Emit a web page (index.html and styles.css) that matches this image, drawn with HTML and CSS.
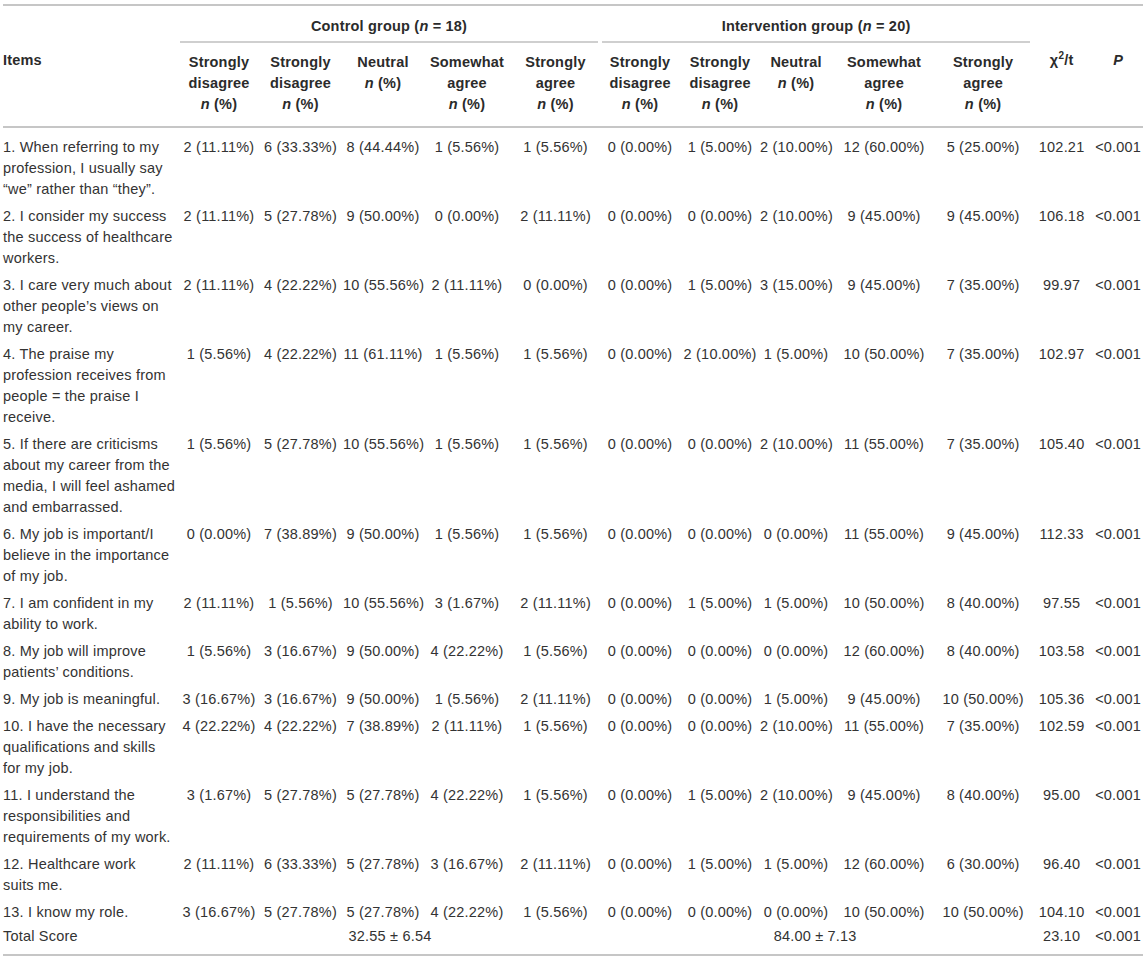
FILE: index.html
```html
<!DOCTYPE html>
<html>
<head>
<meta charset="utf-8">
<link rel="stylesheet" href="styles.css">
</head>
<body>
<table class="tbl">
  <colgroup>
    <col class="c-items">
    <col class="c1"><col class="c2"><col class="c3"><col class="c4"><col class="c5">
    <col class="c6"><col class="c7"><col class="c8"><col class="c9"><col class="c10">
    <col class="c11"><col class="c12">
  </colgroup>
  <thead>
    <tr class="grp-row">
      <th class="items-h" rowspan="2">Items</th>
      <th colspan="5" class="grp"><div class="grp-label grp-left">Control group (<i>n</i> = 18)</div></th>
      <th colspan="5" class="grp"><div class="grp-label grp-right">Intervention group (<i>n</i> = 20)</div></th>
      <th class="stat-h" rowspan="2">χ<sup>2</sup>/t</th>
      <th class="stat-h" rowspan="2"><i>P</i></th>
    </tr>
    <tr class="sub-row">
      <th>Strongly<br>disagree<br><i>n</i> (%)</th>
      <th>Strongly<br>disagree<br><i>n</i> (%)</th>
      <th>Neutral<br><i>n</i> (%)</th>
      <th>Somewhat<br>agree<br><i>n</i> (%)</th>
      <th>Strongly<br>agree<br><i>n</i> (%)</th>
      <th>Strongly<br>disagree<br><i>n</i> (%)</th>
      <th>Strongly<br>disagree<br><i>n</i> (%)</th>
      <th>Neutral<br><i>n</i> (%)</th>
      <th>Somewhat<br>agree<br><i>n</i> (%)</th>
      <th>Strongly<br>agree<br><i>n</i> (%)</th>
    </tr>
  </thead>
  <tbody>
    <tr class="first"><td class="item">1. When referring to my<br>profession, I usually say<br>“we” rather than “they”.</td>
      <td>2 (11.11%)</td><td>6 (33.33%)</td><td>8 (44.44%)</td><td>1 (5.56%)</td><td>1 (5.56%)</td>
      <td>0 (0.00%)</td><td>1 (5.00%)</td><td>2 (10.00%)</td><td>12 (60.00%)</td><td>5 (25.00%)</td>
      <td>102.21</td><td>&lt;0.001</td></tr>
    <tr><td class="item">2. I consider my success<br>the success of healthcare<br>workers.</td>
      <td>2 (11.11%)</td><td>5 (27.78%)</td><td>9 (50.00%)</td><td>0 (0.00%)</td><td>2 (11.11%)</td>
      <td>0 (0.00%)</td><td>0 (0.00%)</td><td>2 (10.00%)</td><td>9 (45.00%)</td><td>9 (45.00%)</td>
      <td>106.18</td><td>&lt;0.001</td></tr>
    <tr><td class="item">3. I care very much about<br>other people’s views on<br>my career.</td>
      <td>2 (11.11%)</td><td>4 (22.22%)</td><td>10 (55.56%)</td><td>2 (11.11%)</td><td>0 (0.00%)</td>
      <td>0 (0.00%)</td><td>1 (5.00%)</td><td>3 (15.00%)</td><td>9 (45.00%)</td><td>7 (35.00%)</td>
      <td>99.97</td><td>&lt;0.001</td></tr>
    <tr><td class="item">4. The praise my<br>profession receives from<br>people = the praise I<br>receive.</td>
      <td>1 (5.56%)</td><td>4 (22.22%)</td><td>11 (61.11%)</td><td>1 (5.56%)</td><td>1 (5.56%)</td>
      <td>0 (0.00%)</td><td>2 (10.00%)</td><td>1 (5.00%)</td><td>10 (50.00%)</td><td>7 (35.00%)</td>
      <td>102.97</td><td>&lt;0.001</td></tr>
    <tr><td class="item">5. If there are criticisms<br>about my career from the<br>media, I will feel ashamed<br>and embarrassed.</td>
      <td>1 (5.56%)</td><td>5 (27.78%)</td><td>10 (55.56%)</td><td>1 (5.56%)</td><td>1 (5.56%)</td>
      <td>0 (0.00%)</td><td>0 (0.00%)</td><td>2 (10.00%)</td><td>11 (55.00%)</td><td>7 (35.00%)</td>
      <td>105.40</td><td>&lt;0.001</td></tr>
    <tr><td class="item">6. My job is important/I<br>believe in the importance<br>of my job.</td>
      <td>0 (0.00%)</td><td>7 (38.89%)</td><td>9 (50.00%)</td><td>1 (5.56%)</td><td>1 (5.56%)</td>
      <td>0 (0.00%)</td><td>0 (0.00%)</td><td>0 (0.00%)</td><td>11 (55.00%)</td><td>9 (45.00%)</td>
      <td>112.33</td><td>&lt;0.001</td></tr>
    <tr><td class="item">7. I am confident in my<br>ability to work.</td>
      <td>2 (11.11%)</td><td>1 (5.56%)</td><td>10 (55.56%)</td><td>3 (1.67%)</td><td>2 (11.11%)</td>
      <td>0 (0.00%)</td><td>1 (5.00%)</td><td>1 (5.00%)</td><td>10 (50.00%)</td><td>8 (40.00%)</td>
      <td>97.55</td><td>&lt;0.001</td></tr>
    <tr><td class="item">8. My job will improve<br>patients’ conditions.</td>
      <td>1 (5.56%)</td><td>3 (16.67%)</td><td>9 (50.00%)</td><td>4 (22.22%)</td><td>1 (5.56%)</td>
      <td>0 (0.00%)</td><td>0 (0.00%)</td><td>0 (0.00%)</td><td>12 (60.00%)</td><td>8 (40.00%)</td>
      <td>103.58</td><td>&lt;0.001</td></tr>
    <tr><td class="item">9. My job is meaningful.</td>
      <td>3 (16.67%)</td><td>3 (16.67%)</td><td>9 (50.00%)</td><td>1 (5.56%)</td><td>2 (11.11%)</td>
      <td>0 (0.00%)</td><td>0 (0.00%)</td><td>1 (5.00%)</td><td>9 (45.00%)</td><td>10 (50.00%)</td>
      <td>105.36</td><td>&lt;0.001</td></tr>
    <tr><td class="item">10. I have the necessary<br>qualifications and skills<br>for my job.</td>
      <td>4 (22.22%)</td><td>4 (22.22%)</td><td>7 (38.89%)</td><td>2 (11.11%)</td><td>1 (5.56%)</td>
      <td>0 (0.00%)</td><td>0 (0.00%)</td><td>2 (10.00%)</td><td>11 (55.00%)</td><td>7 (35.00%)</td>
      <td>102.59</td><td>&lt;0.001</td></tr>
    <tr><td class="item">11. I understand the<br>responsibilities and<br>requirements of my work.</td>
      <td>3 (1.67%)</td><td>5 (27.78%)</td><td>5 (27.78%)</td><td>4 (22.22%)</td><td>1 (5.56%)</td>
      <td>0 (0.00%)</td><td>1 (5.00%)</td><td>2 (10.00%)</td><td>9 (45.00%)</td><td>8 (40.00%)</td>
      <td>95.00</td><td>&lt;0.001</td></tr>
    <tr><td class="item">12. Healthcare work<br>suits me.</td>
      <td>2 (11.11%)</td><td>6 (33.33%)</td><td>5 (27.78%)</td><td>3 (16.67%)</td><td>2 (11.11%)</td>
      <td>0 (0.00%)</td><td>1 (5.00%)</td><td>1 (5.00%)</td><td>12 (60.00%)</td><td>6 (30.00%)</td>
      <td>96.40</td><td>&lt;0.001</td></tr>
    <tr><td class="item">13. I know my role.</td>
      <td>3 (16.67%)</td><td>5 (27.78%)</td><td>5 (27.78%)</td><td>4 (22.22%)</td><td>1 (5.56%)</td>
      <td>0 (0.00%)</td><td>0 (0.00%)</td><td>0 (0.00%)</td><td>10 (50.00%)</td><td>10 (50.00%)</td>
      <td>104.10</td><td>&lt;0.001</td></tr>
    <tr class="total"><td class="item">Total Score</td>
      <td colspan="5">32.55 ± 6.54</td>
      <td colspan="5">84.00 ± 7.13</td>
      <td>23.10</td><td>&lt;0.001</td></tr>
  </tbody>
</table>
</body>
</html>
```
FILE: styles.css
```css
html, body {
  margin: 0;
  padding: 0;
  background: #ffffff;
}
body {
  padding: 4px 3px 0 3px;
  font-family: "Liberation Sans", Arial, sans-serif;
  font-size: 14.5px;
  letter-spacing: 0.2px;
  color: #333333;
}
.tbl {
  width: 1140px;
  border-collapse: collapse;
  table-layout: fixed;
  border-top: 2px solid #c6c6c6;
  border-bottom: 2px solid #c6c6c6;
}
.c-items { width: 177px; }
.c1 { width: 78px; }
.c2 { width: 85px; }
.c3 { width: 80px; }
.c4 { width: 88px; }
.c5 { width: 89px; }
.c6 { width: 80px; }
.c7 { width: 80px; }
.c8 { width: 72px; }
.c9 { width: 104px; }
.c10 { width: 94px; }
.c11 { width: 63px; }
.c12 { width: 50px; }

th {
  font-weight: bold;
  line-height: 21px;
  vertical-align: top;
  text-align: center;
  padding: 0;
  color: #2b2b2b;
}
th i { font-style: italic; }
.items-h {
  text-align: left;
  padding-top: 44px;
}
.stat-h {
  padding-top: 44px;
}
.stat-h sup {
  font-size: 10px;
  line-height: 0;
}
.grp {
  padding: 10px 0 0 0;
}
.grp-label {
  padding-bottom: 4px;
  border-bottom: 2px solid #cfcfcf;
}
.grp-left { margin-right: 2px; }
.grp-right { margin-left: 2px; }
.sub-row th {
  padding: 9px 0 11px 0;
}
thead {
  border-bottom: 2px solid #c6c6c6;
}
td {
  vertical-align: top;
  text-align: center;
  line-height: 21px;
  padding: 3px 0 3px 0;
  white-space: nowrap;
}
td.item {
  text-align: left;
}
.first td {
  padding-top: 9px;
}
.total td {
  padding-top: 0;
  padding-bottom: 7px;
}
```
